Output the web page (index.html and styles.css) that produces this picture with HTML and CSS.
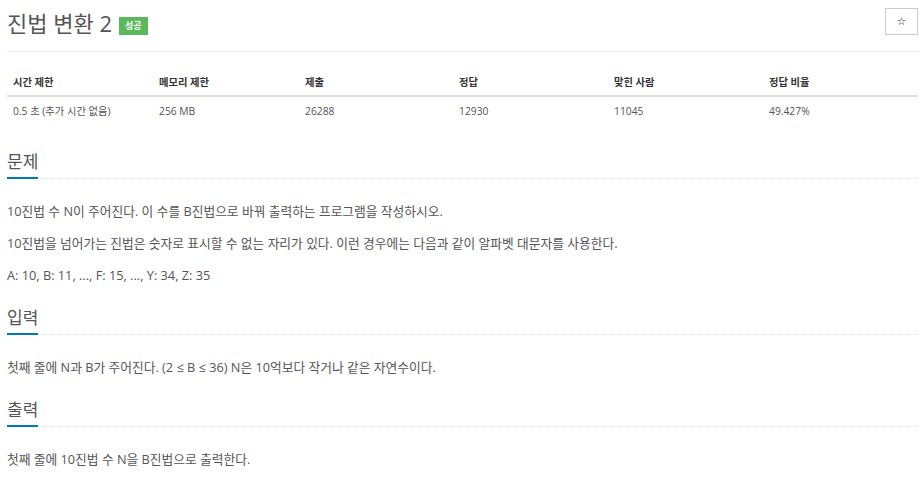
FILE: index.html
```html
<!DOCTYPE html>
<html lang="ko">
<head>
<meta charset="utf-8">
<link rel="stylesheet" href="styles.css">
</head>
<body>
<div class="page">
  <div class="page-header">
    <h1 class="title"><span class="title-text">진법 변환 2</span><span class="badge">성공</span></h1>
    <button class="star-btn" type="button"><span class="star">☆</span></button>
  </div>
  <table class="info">
    <colgroup>
      <col class="c1"><col class="c2"><col class="c3"><col class="c4"><col class="c5"><col class="c6">
    </colgroup>
    <thead>
      <tr><th>시간 제한</th><th>메모리 제한</th><th>제출</th><th>정답</th><th>맞힌 사람</th><th>정답 비율</th></tr>
    </thead>
    <tbody>
      <tr><td>0.5 초 (추가 시간 없음)</td><td>256 MB</td><td>26288</td><td>12930</td><td>11045</td><td>49.427%</td></tr>
    </tbody>
  </table>
  <section class="sect">
    <div class="headline"><h2>문제</h2></div>
    <p>10진법 수 N이 주어진다. 이 수를 B진법으로 바꿔 출력하는 프로그램을 작성하시오.</p>
    <p>10진법을 넘어가는 진법은 숫자로 표시할 수 없는 자리가 있다. 이런 경우에는 다음과 같이 알파벳 대문자를 사용한다.</p>
    <p>A: 10, B: 11, ..., F: 15, ..., Y: 34, Z: 35</p>
  </section>
  <section class="sect">
    <div class="headline"><h2>입력</h2></div>
    <p>첫째 줄에 N과 B가 주어진다. (2 ≤ B ≤ 36) N은 10억보다 작거나 같은 자연수이다.</p>
  </section>
  <section class="sect">
    <div class="headline"><h2>출력</h2></div>
    <p>첫째 줄에 10진법 수 N을 B진법으로 출력한다.</p>
  </section>
</div>
</body>
</html>
```
FILE: styles.css
```css
html, body {
  margin: 0;
  padding: 0;
  background: #fff;
}
body {
  font-family: "Open Sans", "Noto Sans CJK KR", sans-serif;
  color: #555;
}
.page {
  padding: 0 6px 0 7px;
}
.page-header {
  display: flex;
  justify-content: space-between;
  align-items: flex-start;
  border-bottom: 1px solid #eee;
  padding-top: 8px;
  height: 52px;
  box-sizing: border-box;
}
.title {
  margin: 0;
  font-weight: 400;
  font-size: 22px;
  line-height: 30px;
  color: #555;
  display: flex;
  align-items: center;
}
.badge {
  display: inline-block;
  background: #5cb85c;
  color: #fff;
  font-size: 9px;
  font-weight: 700;
  line-height: 18px;
  height: 18px;
  padding: 0 6px;
  margin-left: 7px;
  margin-top: 6px;
}
.star-btn {
  width: 33px;
  height: 27px;
  border: 1px solid #ccc;
  background: #fff;
  padding: 0;
  font-size: 11px;
  color: #333;
  font-family: "DejaVu Sans", sans-serif;
  margin-right: 0;
}
.info {
  width: 100%;
  table-layout: fixed;
  border-collapse: collapse;
  margin: 16px 0 26px;
  font-size: 10.3px;
}
.info col.c1, .info col.c2 { width: 146px; }
.info col.c3 { width: 154px; }
.info col.c4, .info col.c5, .info col.c6 { width: 155px; }
.info th {
  text-align: left;
  font-weight: 700;
  color: #333;
  padding: 6px 6px;
  height: 14px;
  border-bottom: 2px solid #ddd;
}
.info td {
  padding: 6px 6px;
  color: #555;
  height: 14px;
}
.headline {
  border-bottom: 1px dotted #dfe3ea;
  margin: 21px 0 22px;
}
.headline h2 {
  display: inline-block;
  margin: 0 0 -1px;
  font-size: 17px;
  font-weight: 400;
  color: #555;
  line-height: 24px;
  padding: 0 0 3px 0;
  border-bottom: 2px solid #0076c0;
}
.sect p {
  margin: 0 0 12px;
  font-size: 12.75px;
  line-height: 20px;
  color: #555;
}
```
